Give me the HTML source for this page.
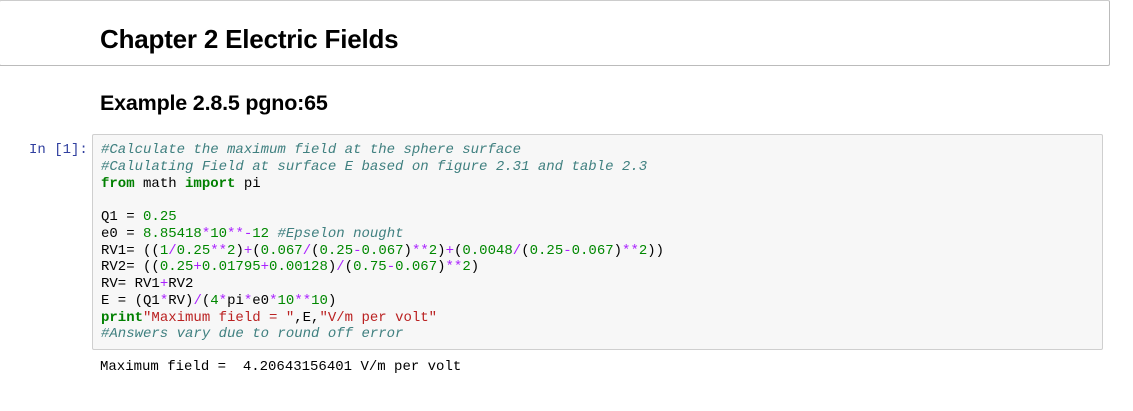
<!DOCTYPE html>
<html><head><style>
body{margin:0;width:1133px;height:411px;background:#fff;position:relative;overflow:hidden;font-family:"Liberation Sans",Arial,sans-serif;}
.top{position:absolute;left:-1px;top:0;width:1109px;height:64px;border:1px solid #bbb;border-top:1px solid #ccc;border-radius:2px;}
h1{position:absolute;left:100px;top:24px;margin:0;font-size:26px;font-weight:bold;line-height:30px;color:#000;letter-spacing:-0.2px;}
h2{position:absolute;left:100px;top:91px;margin:0;font-size:21.5px;font-weight:bold;line-height:24px;color:#000;letter-spacing:-0.2px;}
.prompt{position:absolute;left:29px;top:142px;font-family:"Liberation Mono",monospace;font-size:14px;color:#303f9f;line-height:17px;}
.code{position:absolute;left:92px;top:134px;width:1009px;height:214px;background:#f7f7f7;border:1px solid #cfcfcf;border-radius:2px;}
pre{margin:0;position:absolute;left:101px;top:142px;font-family:"Liberation Mono",monospace;font-size:14px;line-height:16.75px;color:#000;}
.out{left:100px;top:359px;}
.c{color:#408080;font-style:italic}.k{color:#008000;font-weight:bold}.n{color:#080}.o{color:#a2f}.s{color:#ba2121}
</style></head><body>
<div class="top"></div>
<h1>Chapter 2 Electric Fields</h1>
<h2>Example 2.8.5 pgno:65</h2>
<div class="prompt">In [1]:</div>
<div class="code"></div>
<pre><span class="c">#Calculate the maximum field at the sphere surface</span>
<span class="c">#Calulating Field at surface E based on figure 2.31 and table 2.3</span>
<span class="k">from</span> math <span class="k">import</span> pi

Q1 = <span class="n">0.25</span>
e0 = <span class="n">8.85418</span><span class="o">*</span><span class="n">10</span><span class="o">**-</span><span class="n">12</span> <span class="c">#Epselon nought</span>
RV1= ((<span class="n">1</span><span class="o">/</span><span class="n">0.25</span><span class="o">**</span><span class="n">2</span>)<span class="o">+</span>(<span class="n">0.067</span><span class="o">/</span>(<span class="n">0.25</span><span class="o">-</span><span class="n">0.067</span>)<span class="o">**</span><span class="n">2</span>)<span class="o">+</span>(<span class="n">0.0048</span><span class="o">/</span>(<span class="n">0.25</span><span class="o">-</span><span class="n">0.067</span>)<span class="o">**</span><span class="n">2</span>))
RV2= ((<span class="n">0.25</span><span class="o">+</span><span class="n">0.01795</span><span class="o">+</span><span class="n">0.00128</span>)<span class="o">/</span>(<span class="n">0.75</span><span class="o">-</span><span class="n">0.067</span>)<span class="o">**</span><span class="n">2</span>)
RV= RV1<span class="o">+</span>RV2
E = (Q1<span class="o">*</span>RV)<span class="o">/</span>(<span class="n">4</span><span class="o">*</span>pi<span class="o">*</span>e0<span class="o">*</span><span class="n">10</span><span class="o">**</span><span class="n">10</span>)
<span class="k">print</span><span class="s">"Maximum field = "</span>,E,<span class="s">"V/m per volt"</span>
<span class="c">#Answers vary due to round off error</span></pre>
<pre class="out">Maximum field =  4.20643156401 V/m per volt</pre>
</body></html>
